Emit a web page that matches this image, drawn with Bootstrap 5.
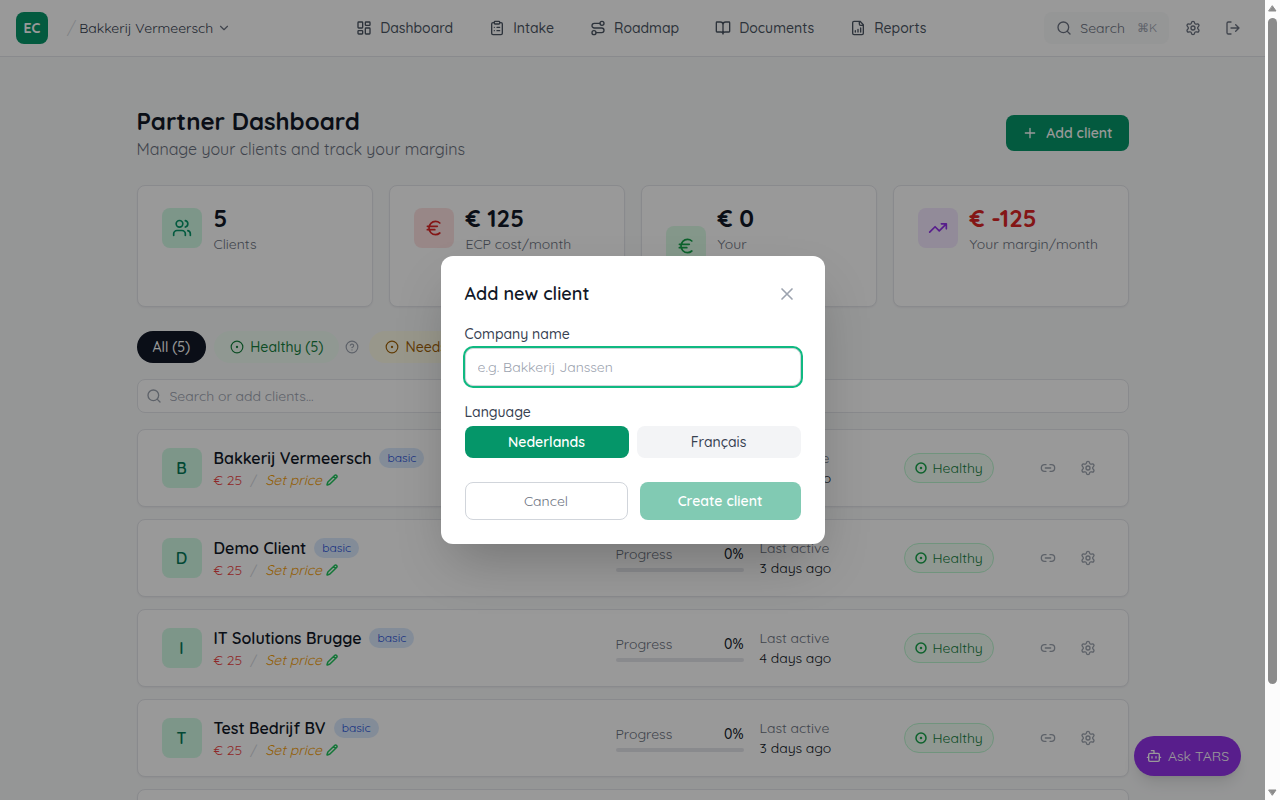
<!DOCTYPE html>
<html lang="en">
<head>
<meta charset="utf-8">
<meta name="viewport" content="width=device-width, initial-scale=1">
<title>Partner Dashboard</title>
<link href="https://cdn.jsdelivr.net/npm/bootstrap@5.3.0/dist/css/bootstrap.min.css" rel="stylesheet">
<style>
body{font-family:Quicksand,"Open Sans",sans-serif;font-size:14px;line-height:20px;color:#111827;background:#fff}
button{font-family:inherit;border:0;background:none;padding:0;color:inherit}
a{color:inherit;text-decoration:none}
svg{display:block;flex:none;fill:none;stroke:currentColor;stroke-width:2;stroke-linecap:round;stroke-linejoin:round}
.i12{width:12px;height:12px}.i14{width:14px;height:14px}.i16{width:16px;height:16px}.i20{width:20px;height:20px}
.fw-500{font-weight:500}
.t-700{color:#374151}.t-600{color:#4b5563}.t-500{color:#6b7280}.t-400{color:#9ca3af}.t-300{color:#d1d5db}
.pane{background:#f9fafb}
.topbar{background:#fff;border-bottom:1px solid #e5e7eb}
.topbar-row{height:56px;padding:0 16px}
.logo{width:32px;height:32px;border-radius:8px;background:#059669;color:#fff;font-weight:700}
.slash{font-size:18px;font-weight:300;margin:0 3px}
.switcher{padding-right:7px}
.main-nav a{padding:6px 16px}
.quick{background:#f9fafb;border-radius:8px;padding:6px 12px}
.quick kbd{font:400 12px/20px Quicksand,sans-serif}
.icon-btn{padding:8px}
.wrap{max-width:992px;padding-top:48px}
.h-title{font-size:24px;line-height:32px;font-weight:700;margin:0}
.h-sub{font-size:16px;line-height:24px;margin:0}
.btn-add{background:#059669;color:#fff;border-radius:8px;padding:8px 16px;font-weight:600}
.panel{background:#fff;border:1px solid #e5e7eb;border-radius:8px;padding:16px 24px;box-shadow:0 1px 2px rgba(0,0,0,.05)}
.tile{width:40px;height:40px;border-radius:8px;font-size:16px;font-weight:600;flex:none}
.tile-green{background:#d1fae5;color:#059669}.tile-lime{background:#dcfce7;color:#16a34a}
.tile-red{background:#fee2e2;color:#dc2626}.tile-purple{background:#f3e8ff;color:#9333ea}
.tile-letter{background:#d1fae5;color:#047857}
.stat-num{font-size:24px;line-height:32px;font-weight:700}
.stat-neg{color:#dc2626}
.stat-tall{min-height:88px}
.pill{border-radius:16px;padding:6px 16px;font-weight:500;gap:6px}
.pill-all{background:#111827;color:#fff}
.pill-ok{background:#f0fdf4;color:#15803d}
.pill-warn{background:#fefce8;color:#a16207}
.help{margin:0 2px 0 6px}
.finder{background:#fff;border:1px solid #e5e7eb;border-radius:8px;padding:6px 8px}
.finder input{border:0;outline:0;background:none;padding:0;line-height:20px}
input::placeholder{color:#9ca3af;opacity:1}
.client{margin-bottom:12px}
.cname{font-size:16px;line-height:24px;font-weight:600}
.plan{background:#dbeafe;color:#1d4ed8;font-size:12px;line-height:16px;padding:2px 8px;border-radius:10px}
.cost{color:#ef4444}.setp{color:#f59e0b}.setp .pencil{color:#22c55e;stroke-width:3}
.col-w{width:128px}.col-badge{width:112px}
.bar{height:4px;border-radius:2px;background:#e5e7eb}
.state{border:1px solid #bbf7d0;background:#f0fdf4;color:#15803d;border-radius:15px;padding:4px 10px;gap:6px}
.state svg{color:#16a34a;stroke-width:3}
.ask{right:24px;bottom:24px;background:#9333ea;color:#fff;border-radius:20px;padding:10px 12px;gap:6px;box-shadow:0 10px 15px -3px rgba(0,0,0,.1),0 4px 6px -4px rgba(0,0,0,.1)}
.scrim{background:rgba(0,0,0,.4);z-index:10}
.dlg{width:384px;background:#fff;border-radius:12px;padding:24px;box-shadow:0 25px 50px -12px rgba(0,0,0,.25)}
.dlg h2{font-size:18px;line-height:28px;font-weight:600;margin:0}
.dlg .lbl{font-weight:500;margin-bottom:4px}
.dlg input{border:1px solid #d1d5db;border-radius:8px;padding:8px 12px;line-height:20px;height:38px;outline:0;box-shadow:0 0 0 2px #10b981;margin-bottom:16px}
.dlg .half{flex:1 1 0;border-radius:8px;padding:6px 0}
.on{background:#059669;color:#fff;font-weight:600}
.off{background:#f3f4f6;font-weight:500}
.dlg .act{padding:8px 16px}
.dlg .cancel{border:1px solid #d1d5db}
.dlg .create,.dlg .create:disabled{padding:9px 16px;background:#059669;color:#fff;font-weight:600;opacity:.5}
.rail{width:15px;background:#fcfcfc;padding:5px 0 4px;flex:none}
.rail svg{width:9px;height:7px;fill:#8b8b8b;stroke:#8b8b8b;stroke-width:1}
.rail-track{padding:6px 0 5px}
.rail-thumb{width:9px;height:87%;border-radius:5px;background:#8b8b8b}
</style>
<script src="https://cdn.jsdelivr.net/npm/bootstrap@5.3.0/dist/js/bootstrap.bundle.min.js"></script>
</head>
<body class="d-flex vh-100 overflow-hidden">
<svg class="d-none" aria-hidden="true">
<symbol id="dash" viewBox="0 0 24 24"><rect width="7" height="9" x="3" y="3" rx="1"/><rect width="7" height="5" x="14" y="3" rx="1"/><rect width="7" height="9" x="14" y="12" rx="1"/><rect width="7" height="5" x="3" y="16" rx="1"/></symbol>
<symbol id="clip" viewBox="0 0 24 24"><rect width="8" height="4" x="8" y="2" rx="1"/><path d="M16 4h2a2 2 0 0 1 2 2v14a2 2 0 0 1-2 2H6a2 2 0 0 1-2-2V6a2 2 0 0 1 2-2h2M12 11h4M12 16h4M8 11h.01M8 16h.01"/></symbol>
<symbol id="route" viewBox="0 0 24 24"><circle cx="6" cy="19" r="3"/><path d="M9 19h8.500a3.500 3.500 0 0 0 0-7h-11a3.500 3.500 0 0 1 0-7H15"/><circle cx="18" cy="5" r="3"/></symbol>
<symbol id="book" viewBox="0 0 24 24"><path d="M12 7v14M3 18a1 1 0 0 1-1-1V4a1 1 0 0 1 1-1h5a4 4 0 0 1 4 4 4 4 0 0 1 4-4h5a1 1 0 0 1 1 1v13a1 1 0 0 1-1 1h-6a3 3 0 0 0-3 3 3 3 0 0 0-3-3z"/></symbol>
<symbol id="report" viewBox="0 0 24 24"><path d="M15 2H6a2 2 0 0 0-2 2v16a2 2 0 0 0 2 2h12a2 2 0 0 0 2-2V7ZM14 2v4a2 2 0 0 0 2 2h4M8 18v-2M12 18v-4M16 18v-6"/></symbol>
<symbol id="search" viewBox="0 0 24 24"><circle cx="11" cy="11" r="8"/><path d="m21 21-4.300-4.300"/></symbol>
<symbol id="gear" viewBox="0 0 24 24"><path d="M9.671 4.136a2.34 2.34 0 0 1 4.659 0 2.34 2.34 0 0 0 3.319 1.915 2.34 2.34 0 0 1 2.33 4.033 2.34 2.34 0 0 0 0 3.831 2.34 2.34 0 0 1-2.33 4.033 2.34 2.34 0 0 0-3.319 1.915 2.34 2.34 0 0 1-4.659 0 2.34 2.34 0 0 0-3.32-1.915 2.34 2.34 0 0 1-2.33-4.033 2.34 2.34 0 0 0 0-3.831A2.34 2.34 0 0 1 6.35 6.051a2.34 2.34 0 0 0 3.319-1.915"/><circle cx="12" cy="12" r="3"/></symbol>
<symbol id="out" viewBox="0 0 24 24"><path d="M9 21H5a2 2 0 0 1-2-2V5a2 2 0 0 1 2-2h4M16 17l5-5-5-5M21 12H9"/></symbol>
<symbol id="plus" viewBox="0 0 24 24"><path d="M5 12h14M12 5v14"/></symbol>
<symbol id="down" viewBox="0 0 24 24"><path d="m6 9 6 6 6-6"/></symbol>
<symbol id="users" viewBox="0 0 24 24"><path d="M16 21v-2a4 4 0 0 0-4-4H6a4 4 0 0 0-4 4v2"/><circle cx="9" cy="7" r="4"/><path d="M22 21v-2a4 4 0 0 0-3-3.870M16 3.130a4 4 0 0 1 0 7.750"/></symbol>
<symbol id="euro" viewBox="0 0 24 24"><path d="M4 10h12M4 14h9M19 6a7.700 7.700 0 0 0-5.200-2A7.900 7.900 0 0 0 6 12c0 4.400 3.500 8 7.800 8 2 0 3.800-.8 5.200-2"/></symbol>
<symbol id="trend" viewBox="0 0 24 24"><path d="M16 7h6v6M22 7l-8.500 8.500-5-5L2 17"/></symbol>
<symbol id="dot" viewBox="0 0 24 24"><circle cx="12" cy="12" r="10"/><circle cx="12" cy="12" r="1"/></symbol>
<symbol id="help" viewBox="0 0 24 24"><circle cx="12" cy="12" r="10"/><path d="M9.090 9a3 3 0 0 1 5.830 1c0 2-3 3-3 3M12 17h.01"/></symbol>
<symbol id="pen" viewBox="0 0 24 24"><path d="M21.174 6.812a1 1 0 0 0-3.986-3.987L3.842 16.174a2 2 0 0 0-.5.830l-1.321 4.352a.5.5 0 0 0 .623.622l4.353-1.320a2 2 0 0 0 .830-.497zM15 5l4 4"/></symbol>
<symbol id="link" viewBox="0 0 24 24"><path d="M9 17H7A5 5 0 0 1 7 7h2M15 7h2a5 5 0 1 1 0 10h-2M8 12h8"/></symbol>
<symbol id="bot" viewBox="0 0 24 24"><path d="M12 8V4H8"/><rect width="16" height="12" x="4" y="8" rx="2"/><path d="M2 14h2M20 14h2M15 13v2M9 13v2"/></symbol>
<symbol id="x" viewBox="0 0 24 24"><path d="M18 6 6 18M6 6l12 12"/></symbol>
</svg>

<div class="pane flex-fill position-relative overflow-hidden">
<header class="topbar">
<div class="topbar-row d-flex align-items-center justify-content-between">
<div class="d-flex align-items-center">
<a href="#" class="logo d-flex align-items-center justify-content-center me-3">EC</a>
<span class="slash t-300">/</span>
<button type="button" class="switcher d-flex align-items-center gap-1 t-700">Bakkerij Vermeersch <svg class="i14 t-500"><use href="#down"/></svg></button>
</div>
<nav class="main-nav d-flex gap-1 fw-500 t-600">
<a href="#" class="d-flex align-items-center gap-2"><svg class="i16"><use href="#dash"/></svg>Dashboard</a>
<a href="#" class="d-flex align-items-center gap-2"><svg class="i16"><use href="#clip"/></svg>Intake</a>
<a href="#" class="d-flex align-items-center gap-2"><svg class="i16"><use href="#route"/></svg>Roadmap</a>
<a href="#" class="d-flex align-items-center gap-2"><svg class="i16"><use href="#book"/></svg>Documents</a>
<a href="#" class="d-flex align-items-center gap-2"><svg class="i16"><use href="#report"/></svg>Reports</a>
</nav>
<div class="d-flex align-items-center gap-2 t-500">
<button type="button" class="quick d-flex align-items-center gap-2"><svg class="i16"><use href="#search"/></svg>Search<kbd class="bg-transparent p-0 ms-1 t-400">⌘K</kbd></button>
<button type="button" class="icon-btn" aria-label="Settings"><svg class="i16"><use href="#gear"/></svg></button>
<button type="button" class="icon-btn" aria-label="Log out"><svg class="i16"><use href="#out"/></svg></button>
</div>
</div>
</header>

<main class="wrap mx-auto">
<div class="d-flex align-items-center justify-content-between mb-4">
<div><h1 class="h-title">Partner Dashboard</h1><p class="h-sub t-500">Manage your clients and track your margins</p></div>
<button type="button" class="btn-add d-flex align-items-center gap-2"><svg class="i16"><use href="#plus"/></svg>Add client</button>
</div>

<div class="row row-cols-4 gx-3 mb-4">
<div class="col"><div class="panel h-100 d-flex align-items-start"><div class="d-flex align-items-center gap-2">
<div class="tile tile-green d-flex align-items-center justify-content-center me-1"><svg class="i20"><use href="#users"/></svg></div>
<div><div class="stat-num">5</div><div class="t-500">Clients</div></div></div></div></div>
<div class="col"><div class="panel h-100 d-flex align-items-start"><div class="d-flex align-items-center gap-2">
<div class="tile tile-red d-flex align-items-center justify-content-center me-1"><svg class="i20"><use href="#euro"/></svg></div>
<div><div class="stat-num">€ 125</div><div class="t-500">ECP cost/month</div></div></div></div></div>
<div class="col"><div class="panel h-100 d-flex align-items-start"><div class="d-flex align-items-center gap-2">
<div class="tile tile-lime d-flex align-items-center justify-content-center me-1"><svg class="i20"><use href="#euro"/></svg></div>
<div class="stat-tall"><div class="stat-num">€ 0</div><div class="t-500">Your<br>revenue/month</div></div></div></div></div>
<div class="col"><div class="panel h-100 d-flex align-items-start"><div class="d-flex align-items-center gap-2">
<div class="tile tile-purple d-flex align-items-center justify-content-center me-1"><svg class="i20"><use href="#trend"/></svg></div>
<div><div class="stat-num stat-neg">€ -125</div><div class="t-500">Your margin/month</div></div></div></div></div>
</div>

<div class="d-flex align-items-center gap-2 mb-3">
<button type="button" class="pill pill-all">All (5)</button>
<div class="d-flex align-items-center"><button type="button" class="pill pill-ok d-flex align-items-center"><svg class="i14"><use href="#dot"/></svg>Healthy (5)</button>
<button type="button" class="help t-400" aria-label="About healthy clients"><svg class="i14"><use href="#help"/></svg></button></div>
<button type="button" class="pill pill-warn d-flex align-items-center"><svg class="i14"><use href="#dot"/></svg>Needs attention (0)</button>
</div>

<label class="finder d-flex align-items-center gap-1 mb-3 t-400"><svg class="i16 me-1"><use href="#search"/></svg><input type="text" class="flex-fill" placeholder="Search or add clients..." aria-label="Search or add clients"></label>

<section id="clients"></section>
</main>

<button type="button" class="ask position-absolute d-flex align-items-center"><svg class="i16"><use href="#bot"/></svg>Ask TARS</button>

<div class="scrim position-absolute top-0 start-0 w-100 h-100 d-flex align-items-center justify-content-center">
<form class="dlg" role="dialog" aria-labelledby="dlg-title">
<div class="d-flex align-items-center justify-content-between mb-3"><h2 id="dlg-title">Add new client</h2><button type="button" class="p-1 t-400" aria-label="Close"><svg class="i20"><use href="#x"/></svg></button></div>
<label class="lbl d-block t-700" for="company">Company name</label>
<input id="company" type="text" class="w-100 d-block" placeholder="e.g. Bakkerij Janssen">
<div class="lbl t-700" id="lang">Language</div>
<div class="d-flex gap-2 mb-4" role="group" aria-labelledby="lang"><button type="button" class="half on">Nederlands</button><button type="button" class="half off t-700">Français</button></div>
<div class="d-flex gap-2"><button type="button" class="half act cancel t-500 me-1">Cancel</button><button type="submit" class="half create" disabled>Create client</button></div>
</form>
</div>
</div>

<div class="rail d-flex flex-column align-items-center" aria-hidden="true">
<svg viewBox="0 0 9 7"><path d="M4.500 1 8 6H1z"/></svg>
<div class="rail-track flex-fill"><div class="rail-thumb"></div></div>
<svg viewBox="0 0 9 7"><path d="M4.500 6 8 1H1z"/></svg>
</div>

<script>
const clients = [
  ["Bakkerij Vermeersch", "3 days ago"],
  ["Demo Client", "3 days ago"],
  ["IT Solutions Brugge", "4 days ago"],
  ["Test Bedrijf BV", "3 days ago"],
  ["Van Damme Bouw", "4 days ago"]
];
document.getElementById("clients").innerHTML = clients.map(([name, seen]) => `
<article class="panel client d-flex align-items-center gap-3">
  <div class="d-flex align-items-center flex-fill">
    <div class="tile tile-letter d-flex align-items-center justify-content-center me-2">${name[0]}</div>
    <div class="ms-1">
      <div class="d-flex align-items-center gap-2"><span class="cname">${name}</span><span class="plan">basic</span></div>
      <div class="d-flex align-items-center gap-2"><span class="cost">€ 25</span><span class="t-300">/</span><button type="button" class="setp d-flex align-items-center gap-1"><em>Set price</em><svg class="i12 pencil"><use href="#pen"/></svg></button></div>
    </div>
  </div>
  <div class="col-w"><div class="d-flex justify-content-between mb-1"><span class="t-500">Progress</span><span class="fw-500">0%</span></div><div class="bar"></div></div>
  <div class="col-w"><div class="t-500">Last active</div><div>${seen}</div></div>
  <div class="col-badge"><span class="state d-inline-flex align-items-center"><svg class="i12"><use href="#dot"/></svg>Healthy</span></div>
  <div class="d-flex gap-2 t-400"><button type="button" class="icon-btn" aria-label="Copy link"><svg class="i16"><use href="#link"/></svg></button><button type="button" class="icon-btn" aria-label="Client settings"><svg class="i16"><use href="#gear"/></svg></button></div>
</article>`).join("");
</script>
</body>
</html>
